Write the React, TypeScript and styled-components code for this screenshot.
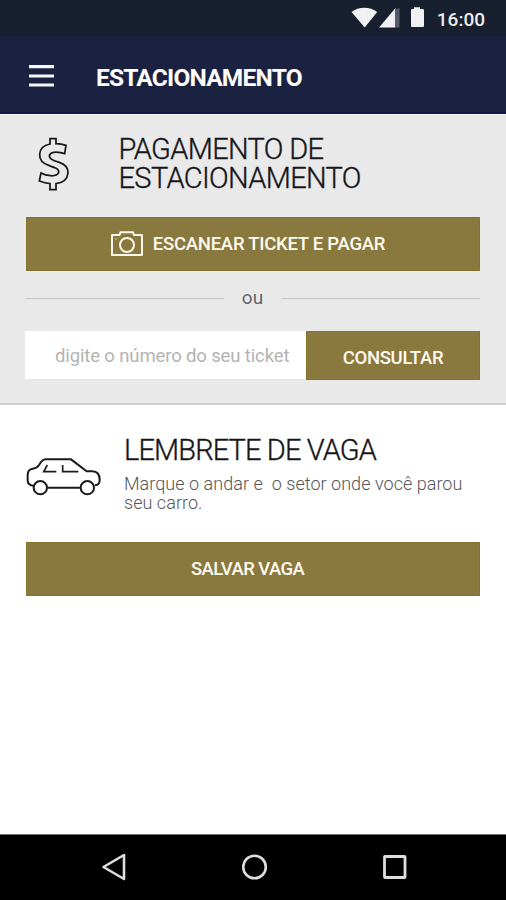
import React from "react";
import styled, { createGlobalStyle } from "styled-components";

const GlobalStyle = createGlobalStyle`
  * { box-sizing: border-box; }
  body { margin: 0; background: #fff; font-family: Roboto, "Liberation Sans", sans-serif; }
  h1, h2, p { margin: 0; font-weight: 400; }
  button, input { font: inherit; border: 0; border-radius: 0; padding: 0; }
  svg { display: block; flex: none; }
`;

const Screen = styled.div`
  width: 506px;
  height: 900px;
  display: flex;
  flex-direction: column;
  overflow: hidden;
  background: #fff;
`;

const StatusBar = styled.div`
  height: 36px;
  flex: none;
  display: flex;
  justify-content: flex-end;
  padding-right: 21px;
  background: #181f2e;
`;

const Clock = styled.span`
  margin-left: 11px;
  color: #ececee;
  font-size: 19px;
  font-weight: 500;
  line-height: 40px;
`;

const AppBar = styled.header`
  height: 78px;
  flex: none;
  display: flex;
  align-items: center;
  padding-left: 28px;
  background: #1b2141;
  border-bottom: 2px solid #101746;
`;

const MenuButton = styled.button`
  width: 26px;
  height: 24px;
  margin-top: 4px;
  background: none;
`;

const AppTitle = styled.h1`
  margin: 8px 0 0 42px;
  color: #fff;
  font-size: 24.5px;
  font-weight: 700;
  line-height: 30px;
  letter-spacing: -0.8px;
  white-space: nowrap;
`;

const PaymentPanel = styled.section`
  height: 291px;
  flex: none;
  padding: 16px 26px 0 20px;
  background: #e9e9e9;
  border-top: 1px solid #f4f3f2;
  border-bottom: 2px solid #d0d0d0;
`;

const PaymentHeading = styled.div`
  display: flex;
  height: 86px;
`;

const Heading = styled.h2<{ $spacing: number }>`
  color: #16161a;
  font-size: 29px;
  font-weight: 300;
  -webkit-text-stroke: 0.35px #16161a;
  line-height: 29.4px;
  letter-spacing: ${(p) => p.$spacing}px;
  white-space: nowrap;
`;

const PaymentTitle = styled(Heading)`
  display: flex;
  flex-direction: column;
  margin: 4px 0 0 28.5px;
`;

const TitleLine = styled.span`
  height: 29.4px;
`;

const ActionButton = styled.button<{ $spacing?: number; $shift?: number }>`
  display: flex;
  align-items: center;
  justify-content: center;
  width: 454px;
  height: 54px;
  margin-left: 6px;
  padding-right: ${(p) => p.$shift ?? 0}px;
  background: #8a793e;
  box-shadow: inset 0 0 0 1px #85732b;
  color: #fdfaf0;
  font-size: 18.5px;
  font-weight: 500;
  letter-spacing: ${(p) => p.$spacing ?? 0}px;
  white-space: nowrap;
`;

const CameraIcon = styled.svg`
  margin-right: 10px;
`;

const Separator = styled.div`
  display: flex;
  align-items: center;
  height: 54px;
  margin-left: 5px;
  color: #66666a;
  font-size: 19px;
`;

const Rule = styled.span`
  flex: 1;
  height: 1px;
  background: #c6c6c6;
`;

const SeparatorText = styled.span`
  width: 57px;
  margin-top: -2px;
  text-align: center;
`;

const TicketForm = styled.div`
  display: flex;
  height: 49px;
  margin: 6px 0 0 5px;
`;

const TicketInput = styled.input`
  width: 281px;
  height: 48px;
  padding: 2px 0 0 30px;
  background: #fff;
  outline: 0;
  font-size: 18.5px;
  letter-spacing: -0.13px;
  &::placeholder {
    color: #b3b3b3;
    opacity: 1;
  }
`;

const ConsultButton = styled(ActionButton)`
  flex: 1;
  width: auto;
  height: 49px;
  margin-left: 0;
  padding-top: 5px;
`;

const ReminderSection = styled.section`
  flex: 1;
  padding: 30px 26px 0 20px;
`;

const ReminderHeading = styled.div`
  display: flex;
  height: 107.4px;
`;

const CarIcon = styled.svg`
  margin: 10px 0 0 -5px;
`;

const ReminderText = styled.div`
  margin: 1px 0 0 9px;
`;

const Description = styled.p`
  margin-top: 9px;
  color: #55555a;
  font-size: 18px;
  font-weight: 300;
  line-height: 19px;
  letter-spacing: 0.04px;
  white-space: pre;
`;

const NavigationBar = styled.nav`
  height: 66px;
  flex: none;
  background: #000;
  border-top: 1px solid #6f6f6f;
  display: flex;
  align-items: center;
  padding: 0 98px 2px 101px;
  justify-content: space-between;
`;

export default function App() {
  return (
    <>
      <GlobalStyle />
      <Screen>
        <StatusBar>
          <svg width="76" height="36" viewBox="0 0 76 36">
            <path d="M1.5 12C8.5 6.2 20 6.2 27.2 12L14.7 27.5Z" fill="#f1f1f3" />
            <path d="M45.5 27.5V8L29 27.5Z" fill="#f1f1f3" />
            <path d="M45 9.5 49.5 8V27.5H45Z" fill="#555b69" />
            <path d="M61 10Q61 9 62 9H64V7.3H70V9H72.5Q74 9 74 10V26Q74 27 73 27H62Q61 27 61 26Z" fill="#f1f1f3" />
          </svg>
          <Clock>16:00</Clock>
        </StatusBar>

        <AppBar>
          <MenuButton aria-label="Menu">
            <svg width="26" height="24" viewBox="0 0 26 24">
              <path d="M1 2.6H26M1 12H26M1 21H26" stroke="#f8f8fa" strokeWidth="3.2" />
            </svg>
          </MenuButton>
          <AppTitle>ESTACIONAMENTO</AppTitle>
        </AppBar>

        <PaymentPanel>
          <PaymentHeading>
            <svg width="70" height="70" viewBox="0 0 210 210" fill="none" stroke="#17171a" strokeWidth="5.2">
              <path d="M90 23H108V38C120 38 130 40 138 43L134 68C118 62 96 60 89 71C85 82 96 88 118 94C136 100 145 112 144 126C142 146 126 156 108 158V176H90V158C78 157 68 154 58 150L63 126C76 133 108 141 116 125C118 113 104 109 88 104C66 97 58 86 59 70C60 52 74 42 90 39Z" />
            </svg>
            <PaymentTitle $spacing={-0.65}>
              <TitleLine>PAGAMENTO DE</TitleLine>
              <TitleLine>ESTACIONAMENTO</TitleLine>
            </PaymentTitle>
          </PaymentHeading>

          <ActionButton $shift={10} $spacing={-0.25}>
            <CameraIcon width="32" height="26" viewBox="0 0 32 26" fill="none" stroke="#fdf8ea" strokeWidth="2">
              <path d="M1 4H8.5L9.5 1.3H22L23 4H31V24H1Z" strokeLinejoin="round" />
              <circle cx="16" cy="14" r="7" />
              <path d="M4 8H6" strokeWidth="1.2" opacity="0.6" />
            </CameraIcon>
            ESCANEAR TICKET E PAGAR
          </ActionButton>

          <Separator>
            <Rule />
            <SeparatorText>ou</SeparatorText>
            <Rule />
          </Separator>

          <TicketForm>
            <TicketInput placeholder="digite o número do seu ticket" />
            <ConsultButton $spacing={-0.3}>CONSULTAR</ConsultButton>
          </TicketForm>
        </PaymentPanel>

        <ReminderSection>
          <ReminderHeading>
            <CarIcon width="100" height="60" viewBox="0 0 300 180" fill="none" stroke="#1b1b1d" strokeWidth="6">
              <path d="M54 122Q38 121 38 106V90Q38 73 53 71Q65 70 72 60Q82 43 92 43H168L215 79H232Q254 80 254 104Q255 120 240 121M97 128H196" />
              <circle cx="76" cy="128" r="20" />
              <circle cx="217" cy="128" r="20" />
              <path d="M97 60 86 80H124M143 60V80H190" strokeWidth="5" />
            </CarIcon>
            <ReminderText>
              <Heading $spacing={-0.88}>LEMBRETE DE VAGA</Heading>
              <Description>{"Marque o andar e  o setor onde você parou\nseu carro."}</Description>
            </ReminderText>
          </ReminderHeading>
          <ActionButton $shift={11} $spacing={-0.6}>SALVAR VAGA</ActionButton>
        </ReminderSection>

        <NavigationBar>
          <svg width="26" height="30" viewBox="0 0 26 30" fill="none" stroke="#dedede" strokeWidth="2.6">
            <path d="M2.5 15 23 3V27Z" strokeLinejoin="round" />
          </svg>
          <svg width="26" height="26" viewBox="0 0 26 26" fill="none" stroke="#dedede" strokeWidth="2.6">
            <circle cx="12.5" cy="13" r="11.3" />
          </svg>
          <svg width="26" height="26" viewBox="0 0 26 26" fill="none" stroke="#dedede" strokeWidth="2.8">
            <rect x="2.5" y="2.5" width="20.5" height="21" rx="0.5" />
          </svg>
        </NavigationBar>
      </Screen>
    </>
  );
}
